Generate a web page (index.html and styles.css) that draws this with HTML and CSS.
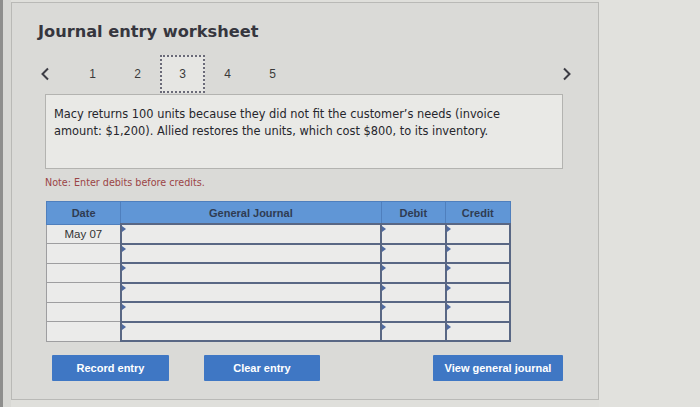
FILE: index.html
```html
<!DOCTYPE html>
<html>
<head>
<meta charset="utf-8">
<link rel="stylesheet" href="styles.css">
</head>
<body>
<div class="screen">
  <div class="bezel"></div>
  <div class="gutter"></div>
  <div class="panel">
    <h1 class="title">Journal entry worksheet</h1>
    <div class="nav">
      <span class="prev"><svg width="10" height="14" viewBox="0 0 10 14"><path d="M8 1.5 L2.5 7 L8 12.5" fill="none" stroke="#3c3c44" stroke-width="2"/></svg></span>
      <span class="step">1</span>
      <span class="step">2</span>
      <span class="step current">3</span>
      <span class="step">4</span>
      <span class="step">5</span>
      <span class="spacer"></span>
      <span class="next"><svg width="10" height="14" viewBox="0 0 10 14"><path d="M2 1.5 L7.5 7 L2 12.5" fill="none" stroke="#3c3c44" stroke-width="2"/></svg></span>
    </div>
    <div class="question">Macy returns 100 units because they did not fit the customer’s needs (invoice amount: $1,200). Allied restores the units, which cost $800, to its inventory.</div>
    <div class="note">Note: Enter debits before credits.</div>
    <table class="journal">
      <thead>
        <tr><th class="c-date">Date</th><th class="c-acct">General Journal</th><th class="c-num">Debit</th><th class="c-num">Credit</th></tr>
      </thead>
      <tbody>
        <tr><td class="date">May 07</td><td class="inp"><i></i></td><td class="inp"><i></i></td><td class="inp"><i></i></td></tr>
        <tr><td class="date"></td><td class="inp"><i></i></td><td class="inp"><i></i></td><td class="inp"><i></i></td></tr>
        <tr><td class="date"></td><td class="inp"><i></i></td><td class="inp"><i></i></td><td class="inp"><i></i></td></tr>
        <tr><td class="date"></td><td class="inp"><i></i></td><td class="inp"><i></i></td><td class="inp"><i></i></td></tr>
        <tr><td class="date"></td><td class="inp"><i></i></td><td class="inp"><i></i></td><td class="inp"><i></i></td></tr>
        <tr><td class="date"></td><td class="inp"><i></i></td><td class="inp"><i></i></td><td class="inp"><i></i></td></tr>
      </tbody>
    </table>
    <div class="buttons">
      <button class="btn b-record">Record entry</button>
      <button class="btn b-clear">Clear entry</button>
      <button class="btn b-view">View general journal</button>
    </div>
  </div>
  <div class="outside"></div>
</div>
</body>
</html>
```
FILE: styles.css
```css
html, body {
  margin: 0;
  padding: 0;
  background: #dfdfdb;
  width: 700px;
  height: 407px;
  overflow: hidden;
}
.screen {
  display: flex;
  height: 407px;
}
.bezel {
  width: 3px;
  background: #8e8e8c;
}
.gutter {
  width: 8px;
  background: #d8d8d4;
}
.panel {
  margin-top: 2px;
  height: 398px;
  width: 588px;
  border: 1px solid #b9b9b6;
  background: #dadad7;
  padding: 0 0 0 33px;
  box-sizing: border-box;
  display: flex;
  flex-direction: column;
  font-family: "DejaVu Sans", Verdana, sans-serif;
}
.outside {
  flex: 1;
  background: #e1e1dd;
}
.title {
  margin: 18px 0 0 -7px;
  font-size: 16.2px;
  line-height: 21px;
  font-weight: bold;
  color: #36363e;
}
.nav {
  margin: 13px 0 0 -7px;
  height: 38px;
  width: 540px;
  display: flex;
  align-items: center;
  font-family: "Liberation Sans", Arial, sans-serif;
  font-size: 12px;
  color: #3a3a3a;
}
.prev {
  width: 32px;
  display: flex;
  justify-content: flex-start;
  padding-left: 2px;
  box-sizing: border-box;
}
.step {
  width: 45px;
  height: 38px;
  display: flex;
  align-items: center;
  justify-content: center;
  box-sizing: border-box;
}
.step.current {
  border: 2px dotted #6a6a78;
  background: #e6e6e3;
}
.spacer { flex: 1; }
.next {
  width: 22px;
  display: flex;
  justify-content: center;
}
.question {
  margin-top: 1px;
  width: 518px;
  height: 75px;
  box-sizing: border-box;
  border: 1px solid #b3b3b0;
  background: #e9e9e6;
  padding: 11px 50px 0 8px;
  font-size: 11.4px;
  line-height: 17px;
  color: #26262c;
}
.note {
  margin-top: 7px;
  font-size: 9.6px;
  line-height: 14px;
  color: #9a4446;
}
.journal {
  margin-top: 11px;
  margin-left: 1px;
  width: 465px;
  border-collapse: collapse;
  font-family: "Liberation Sans", Arial, sans-serif;
  font-size: 11px;
}
.journal th {
  height: 21px;
  padding: 0;
  background: #6096d6;
  border: 1px solid #4f7fbd;
  color: #2f3c52;
  font-weight: bold;
  text-align: center;
}
.c-date { width: 74px; }
.c-acct { width: 263px; }
.c-num { width: 64px; }
.journal td {
  height: 16px;
  padding: 0;
  background: #ebebea;
}
.journal td.date {
  border: 1px solid #9e9ea0;
  text-align: center;
  color: #333;
  font-size: 11.5px;
  height: 18.5px;
}
.journal td.inp {
  border: 2px solid #596784;
  position: relative;
}
.journal td.inp i {
  position: absolute;
  left: 0;
  top: 1px;
  width: 0;
  height: 0;
  border-top: 3px solid transparent;
  border-bottom: 3px solid transparent;
  border-left: 4px solid #4f6aa0;
}
.buttons {
  margin-top: 13px;
  display: flex;
  height: 26px;
}
.btn {
  height: 26px;
  border: none;
  border-radius: 1px;
  background: #3f77c4;
  color: #ffffff;
  font-family: "Liberation Sans", Arial, sans-serif;
  font-weight: bold;
  font-size: 11px;
  padding: 0;
}
.b-record { width: 117px; margin-left: 7px; }
.b-clear { width: 116px; margin-left: 35px; }
.b-view { width: 130px; margin-left: 113px; }
```
